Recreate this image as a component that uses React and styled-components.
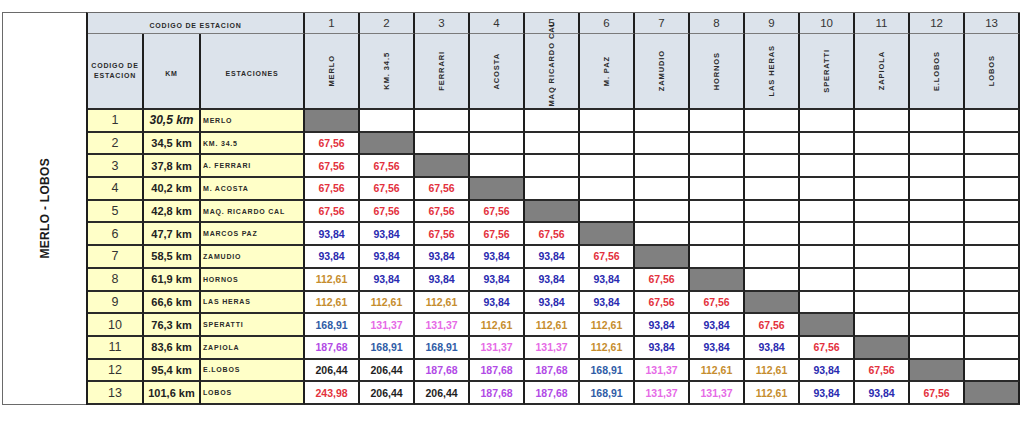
import styled, { createGlobalStyle } from "styled-components";

const GlobalStyle = createGlobalStyle`
  * { box-sizing: border-box; }
  body {
    margin: 0;
    background: #ffffff;
    font-family: "Liberation Sans", Arial, sans-serif;
    color: #222;
  }
`;

const stations = [
  { code: 1, km: "30,5 km", name: "MERLO", head: "MERLO" },
  { code: 2, km: "34,5 km", name: "KM. 34.5", head: "KM. 34.5" },
  { code: 3, km: "37,8 km", name: "A. FERRARI", head: "FERRARI" },
  { code: 4, km: "40,2 km", name: "M. ACOSTA", head: "ACOSTA" },
  { code: 5, km: "42,8 km", name: "MAQ. RICARDO CAL", head: "MAQ RICARDO CAL" },
  { code: 6, km: "47,7 km", name: "MARCOS PAZ", head: "M. PAZ" },
  { code: 7, km: "58,5 km", name: "ZAMUDIO", head: "ZAMUDIO" },
  { code: 8, km: "61,9 km", name: "HORNOS", head: "HORNOS" },
  { code: 9, km: "66,6 km", name: "LAS HERAS", head: "LAS HERAS" },
  { code: 10, km: "76,3 km", name: "SPERATTI", head: "SPERATTI" },
  { code: 11, km: "83,6 km", name: "ZAPIOLA", head: "ZAPIOLA" },
  { code: 12, km: "95,4 km", name: "E.LOBOS", head: "E.LOBOS" },
  { code: 13, km: "101,6 km", name: "LOBOS", head: "LOBOS" },
];

const fares = [
  [],
  ["67,56"],
  ["67,56", "67,56"],
  ["67,56", "67,56", "67,56"],
  ["67,56", "67,56", "67,56", "67,56"],
  ["93,84", "93,84", "67,56", "67,56", "67,56"],
  ["93,84", "93,84", "93,84", "93,84", "93,84", "67,56"],
  ["112,61", "93,84", "93,84", "93,84", "93,84", "93,84", "67,56"],
  ["112,61", "112,61", "112,61", "93,84", "93,84", "93,84", "67,56", "67,56"],
  ["168,91", "131,37", "131,37", "112,61", "112,61", "112,61", "93,84", "93,84", "67,56"],
  ["187,68", "168,91", "168,91", "131,37", "131,37", "112,61", "93,84", "93,84", "93,84", "67,56"],
  ["206,44", "206,44", "187,68", "187,68", "187,68", "168,91", "131,37", "112,61", "112,61", "93,84", "67,56"],
  ["243,98", "206,44", "206,44", "187,68", "187,68", "168,91", "131,37", "131,37", "112,61", "93,84", "93,84", "67,56"],
];

const fareColors = {
  "67,56": "#e3323d",
  "93,84": "#2a2ab0",
  "112,61": "#c68d2e",
  "131,37": "#e66ae6",
  "168,91": "#2f5ca6",
  "187,68": "#b24ae6",
  "206,44": "#1e1e1e",
  "243,98": "#e3323d",
};

const App = () => {
  return (
    <>
      <GlobalStyle />
      <Frame>
        <SidePanel>
          <SideTitle>MERLO - LOBOS</SideTitle>
        </SidePanel>
        <Table>
          <colgroup>
            <col style={{ width: 56 }} />
            <col style={{ width: 57 }} />
            <col style={{ width: 104 }} />
            {stations.map((s) => (
              <col key={s.code} style={{ width: 55 }} />
            ))}
          </colgroup>
          <thead>
            <TopRow>
              <HeadCell colSpan={3}>
                <TinyLabel>CODIGO DE ESTACION</TinyLabel>
              </HeadCell>
              {stations.map((s) => (
                <NumberHead key={s.code}>{s.code}</NumberHead>
              ))}
            </TopRow>
            <NameRow>
              <HeadCell>
                <TinyLabel>
                  CODIGO DE
                  <br />
                  ESTACION
                </TinyLabel>
              </HeadCell>
              <HeadCell>
                <TinyLabel>KM</TinyLabel>
              </HeadCell>
              <HeadCell>
                <TinyLabel>ESTACIONES</TinyLabel>
              </HeadCell>
              {stations.map((s) => (
                <HeadCell key={s.code}>
                  <VerticalBox $long={s.head.length > 12}>
                    <VerticalLabel>{s.head}</VerticalLabel>
                  </VerticalBox>
                </HeadCell>
              ))}
            </NameRow>
          </thead>
          <tbody>
            {stations.map((s, r) => (
              <DataRow key={s.code}>
                <CodeCell>{s.code}</CodeCell>
                <KmCell $italic={r === 0}>{s.km}</KmCell>
                <StationCell>{s.name}</StationCell>
                {stations.map((_, c) => {
                  if (c === r) return <FareCell key={c} $blocked />;
                  const value = fares[r][c];
                  return (
                    <FareCell key={c} style={{ color: fareColors[value] }}>
                      {value || ""}
                    </FareCell>
                  );
                })}
              </DataRow>
            ))}
          </tbody>
        </Table>
      </Frame>
    </>
  );
};

const Frame = styled.div`
  display: flex;
  margin: 12px 0 0 2px;
  width: 1018px;
`;

const SidePanel = styled.div`
  width: 84px;
  flex: none;
  display: flex;
  align-items: center;
  justify-content: center;
  border: 1px solid #6a6a6a;
  border-right: none;
  background: #fff;
`;

const SideTitle = styled.div`
  writing-mode: vertical-rl;
  transform: rotate(180deg);
  font-size: 12px;
  font-weight: bold;
  color: #1a1a1a;
  letter-spacing: 0.3px;
  white-space: nowrap;
`;

const Table = styled.table`
  table-layout: fixed;
  border-collapse: separate;
  border-spacing: 0;
  width: 934px;
  border-left: 2px solid #1e1e1e;
  border-top: 1px solid #6a6a6a;

  td,
  th {
    padding: 0;
    border-right: 2px solid #1e1e1e;
    border-bottom: 2px solid #2a2a2a;
    text-align: center;
    vertical-align: middle;
  }
`;

const TopRow = styled.tr`
  height: 21px;
  background: #dce3eb;

  th {
    border-bottom: 1px solid #7a7a7a;
  }
`;

const NameRow = styled.tr`
  height: 76px;
  background: #dce3eb;
`;

const HeadCell = styled.th`
  font-weight: bold;
  overflow: visible;
`;

const TinyLabel = styled.span`
  display: inline-block;
  font-size: 7px;
  font-weight: bold;
  letter-spacing: 0.8px;
  line-height: 10px;
  color: #2a2a2a;
`;

const NumberHead = styled.th`
  font-size: 11.5px;
  font-weight: normal;
  color: #333;
`;

const VerticalBox = styled.div`
  height: 74px;
  display: flex;
  justify-content: center;
  align-items: ${({ $long }) => ($long ? "flex-end" : "center")};
  padding-bottom: ${({ $long }) => ($long ? "1px" : "0")};
`;

const VerticalLabel = styled.span`
  writing-mode: vertical-rl;
  transform: rotate(180deg);
  font-size: 7.5px;
  font-weight: bold;
  letter-spacing: 0.9px;
  color: #2a2a2a;
  white-space: nowrap;
`;

const DataRow = styled.tr`
  height: 22.7px;
`;

const CodeCell = styled.td`
  background: #ffffc8;
  font-size: 12.5px;
  color: #333;
`;

const KmCell = styled.td`
  background: #ffffc8;
  font-size: ${({ $italic }) => ($italic ? "12px" : "11px")};
  font-style: ${({ $italic }) => ($italic ? "italic" : "normal")};
  font-weight: bold;
  color: #222;
`;

const StationCell = styled.td`
  background: #ffffc8;
  text-align: left !important;
  padding-left: 2px !important;
  font-size: 7px;
  font-weight: bold;
  letter-spacing: 0.8px;
  color: #2a2a2a;
  white-space: nowrap;
`;

const FareCell = styled.td`
  background: ${({ $blocked }) => ($blocked ? "#808080" : "#ffffff")};
  font-size: 10.5px;
  font-weight: bold;
`;

export default App;
